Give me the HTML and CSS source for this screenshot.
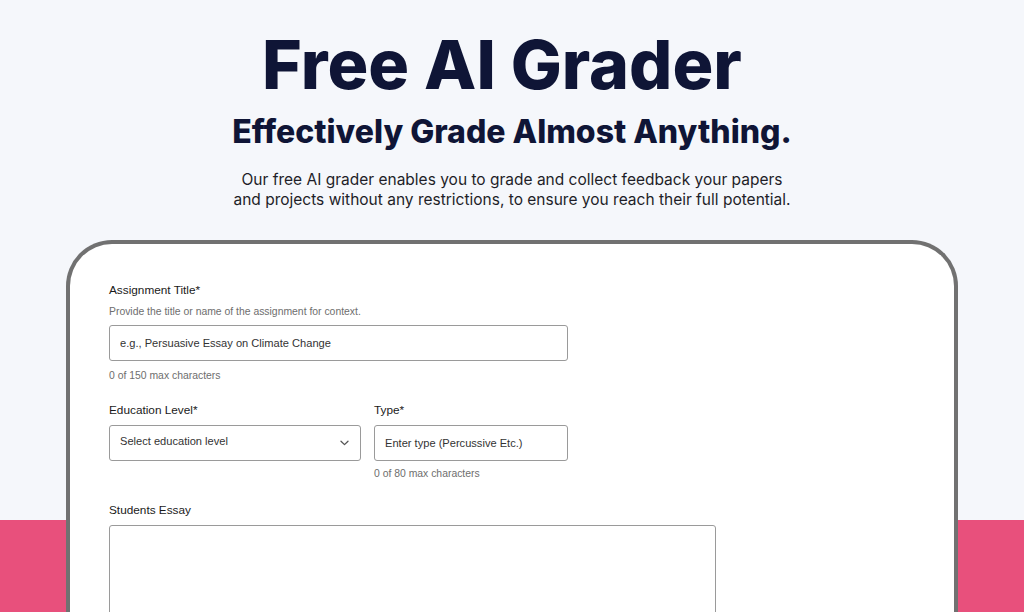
FILE: index.html
```html
<!DOCTYPE html>
<html lang="en">
<head>
<meta charset="utf-8">
<title>Free AI Grader</title>
<link rel="stylesheet" href="styles.css">
</head>
<body>
<header class="hero">
  <h1 class="hero-title">Free AI Grader</h1>
  <h2 class="hero-sub">Effectively Grade Almost Anything.</h2>
  <p class="hero-text">Our free AI grader enables you to grade and collect feedback your papers<br>and projects without any restrictions, to ensure you reach their full potential.</p>
</header>
<main class="card">
  <div class="field">
    <div class="label">Assignment Title*</div>
    <div class="hint">Provide the title or name of the assignment for context.</div>
    <input class="control control-title" type="text" placeholder="e.g., Persuasive Essay on Climate Change">
    <div class="count">0 of 150 max characters</div>
  </div>
  <div class="row">
    <div class="field">
      <div class="label">Education Level*</div>
      <div class="control control-select">
        <span>Select education level</span>
        <svg class="chev" width="9" height="6" viewBox="0 0 9 6"><path d="M1 1.2l3.5 3.4 3.5-3.4" fill="none" stroke="#555" stroke-width="1.3" stroke-linecap="round" stroke-linejoin="round"/></svg>
      </div>
    </div>
    <div class="field">
      <div class="label">Type*</div>
      <input class="control control-type" type="text" placeholder="Enter type (Percussive Etc.)">
      <div class="count count-type">0 of 80 max characters</div>
    </div>
  </div>
  <div class="field">
    <div class="label">Students Essay</div>
    <textarea class="control control-essay"></textarea>
  </div>
</main>
</body>
</html>
```
FILE: styles.css
```css
html, body {
  margin: 0;
  padding: 0;
}
body {
  width: 1024px;
  height: 612px;
  overflow: hidden;
  background: linear-gradient(to bottom, #f5f7fb 0, #f5f7fb 520px, #e8507c 520px, #e8507c 100%);
  font-family: "Liberation Sans", Arial, sans-serif;
}
.hero {
  text-align: center;
  color: #0f1536;
  padding-top: 22px;
}
.hero-title {
  margin: 0;
  padding-right: 20px;
  font-family: Inter, "Noto Sans", sans-serif;
  font-weight: 800;
  font-size: 68px;
  line-height: 84px;
}
.hero-sub {
  margin: 6px 0 0;
  font-family: Inter, "Noto Sans", sans-serif;
  font-weight: 800;
  font-size: 32px;
  line-height: 40px;
}
.hero-text {
  margin: 18px 0 0;
  font-family: Inter, "Noto Sans", sans-serif;
  font-weight: 400;
  font-size: 15.5px;
  line-height: 20px;
  color: #1e1e28;
}
.card {
  box-sizing: border-box;
  width: 892px;
  height: 400px;
  margin: 30px 0 0 66px;
  background: #fff;
  border: 4px solid #717171;
  border-bottom: none;
  border-radius: 46px 46px 0 0;
  padding: 39px 0 0 39px;
}
.field {
  display: flex;
  flex-direction: column;
}
.label {
  font-size: 11.8px;
  line-height: 14px;
  color: #1a1a1a;
}
.hint {
  font-size: 10.4px;
  line-height: 12px;
  color: #6e6e6e;
  margin-top: 9px;
}
.control {
  box-sizing: border-box;
  height: 36px;
  border: 1px solid #9a9a9a;
  border-radius: 3px;
  background: #fff;
  font-family: "Liberation Sans", Arial, sans-serif;
  font-size: 11.1px;
  color: #333;
  padding: 0 10px;
  margin: 8px 0 0;
  outline: none;
}
.control::placeholder {
  color: #333;
  opacity: 1;
}
.control-title {
  width: 459px;
  margin-top: 7px;
}
.count {
  font-size: 10.4px;
  line-height: 12px;
  color: #6e6e6e;
  margin-top: 9px;
}
.count-type {
  margin-top: 7px;
}
.row {
  display: flex;
  gap: 13px;
  margin-top: 21px;
}
.control-select {
  width: 252px;
  display: flex;
  align-items: center;
  justify-content: space-between;
  padding: 0 10px 0 10px;
}
.control-select span {
  margin-top: -4px;
}
.chev {
  margin-right: 1px;
}
.control-type {
  width: 194px;
}
.row + .field {
  margin-top: 23px;
}
.control-essay {
  width: 607px;
  height: 120px;
  resize: none;
  display: block;
}
```
